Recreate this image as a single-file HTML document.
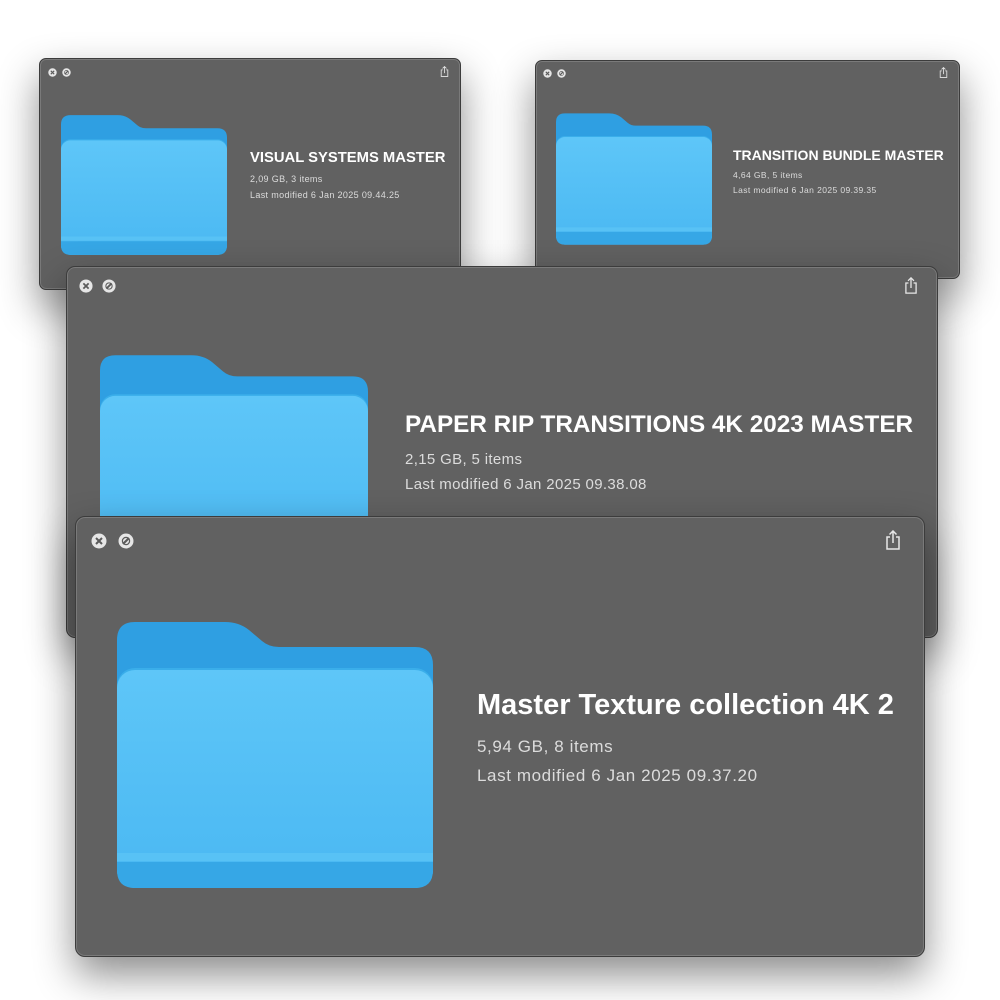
<!DOCTYPE html>
<html><head><meta charset="utf-8"><style>
body{margin:0;width:1000px;height:1000px;background:#fff;position:relative;overflow:hidden;font-family:"Liberation Sans",Arial,sans-serif}
.w{position:absolute;background:#616161;border:1px solid #3c3c3c;box-shadow:inset 0 0 0 1px #7a7a7a,0 18px 40px rgba(0,0,0,.45);box-sizing:border-box}
.f{position:absolute}
.t{position:absolute;color:#fff;font-weight:bold;white-space:nowrap}
.s{position:absolute;color:#dcdcdc;white-space:nowrap}
.ic{position:absolute}
</style></head><body>
<svg width="0" height="0" style="position:absolute">
<defs>
<linearGradient id="fg" x1="0" y1="0" x2="0" y2="1"><stop offset="0" stop-color="#5ec6f8"/><stop offset="1" stop-color="#4ab8f2"/></linearGradient>
<symbol id="folder" viewBox="0 0 316 266">
<path d="M0 18Q0 0 18 0H108Q122 0 132 8L145 19Q152 25 162 25H298Q316 25 316 43V240H0Z" fill="#2f9fe2"/>
<rect x="0" y="46" width="316" height="220" rx="18" fill="#3aaeea"/>
<rect x="0" y="48" width="316" height="218" rx="18" fill="url(#fg)"/>
<rect x="0" y="231" width="316" height="8" fill="#58c2f5"/>
<path d="M0 240H316V248Q316 266 298 266H18Q0 266 0 248Z" fill="#36a7e6"/>
</symbol>
<symbol id="x" viewBox="0 0 16 16"><circle cx="8" cy="8" r="7.5" fill="#e6e6e6"/><path d="M5 5L11 11M11 5L5 11" stroke="#5a5a5a" stroke-width="2"/></symbol>
<symbol id="n" viewBox="0 0 16 16"><circle cx="8" cy="8" r="7.5" fill="#e6e6e6"/><path d="M5 11L11 5" stroke="#5a5a5a" stroke-width="2.2"/><circle cx="8" cy="8" r="3.6" fill="none" stroke="#5a5a5a" stroke-width="1.2"/></symbol>
<symbol id="sh" viewBox="0 0 16 20"><path d="M5 7H2V19H14V7H11M8 13V1M4.5 4.5L8 1L11.5 4.5" fill="none" stroke="#e8e8e8" stroke-width="1.5"/></symbol>
</defs></svg>

<div class="w" style="left:39px;top:58px;width:422px;height:232px;border-radius:7px"></div>
<svg class="ic" style="left:48px;top:68px" width="9" height="9"><use href="#x"/></svg>
<svg class="ic" style="left:62px;top:68px" width="9" height="9"><use href="#n"/></svg>
<svg class="ic" style="left:440px;top:66px" width="9" height="11"><use href="#sh"/></svg>
<svg class="f" style="left:61px;top:115px" width="166" height="140"><use href="#folder"/></svg>
<div class="t" style="left:250px;top:150px;font-size:14.8px">VISUAL SYSTEMS MASTER</div>
<div class="s" style="left:250px;top:174px;font-size:9px;letter-spacing:.35px">2,09 GB, 3 items</div>
<div class="s" style="left:250px;top:190px;font-size:9px;letter-spacing:.35px">Last modified 6 Jan 2025 09.44.25</div>

<div class="w" style="left:535px;top:60px;width:425px;height:219px;border-radius:7px"></div>
<svg class="ic" style="left:543px;top:69px" width="9" height="9"><use href="#x"/></svg>
<svg class="ic" style="left:557px;top:69px" width="9" height="9"><use href="#n"/></svg>
<svg class="ic" style="left:939px;top:67px" width="9" height="11"><use href="#sh"/></svg>
<svg class="f" style="left:556px;top:113px" width="156" height="132"><use href="#folder"/></svg>
<div class="t" style="left:733px;top:147px;font-size:14px">TRANSITION BUNDLE MASTER</div>
<div class="s" style="left:733px;top:170px;font-size:8.5px;letter-spacing:.4px">4,64 GB, 5 items</div>
<div class="s" style="left:733px;top:185px;font-size:8.5px;letter-spacing:.4px">Last modified 6 Jan 2025 09.39.35</div>

<div class="w" style="left:66px;top:266px;width:872px;height:372px;border-radius:9px"></div>
<svg class="ic" style="left:79px;top:279px" width="14" height="14"><use href="#x"/></svg>
<svg class="ic" style="left:102px;top:279px" width="14" height="14"><use href="#n"/></svg>
<svg class="ic" style="left:904px;top:277px" width="14" height="17"><use href="#sh"/></svg>
<svg class="f" style="left:100px;top:355px" width="268" height="226"><use href="#folder"/></svg>
<div class="t" style="left:405px;top:411px;font-size:24.3px">PAPER RIP TRANSITIONS 4K 2023 MASTER</div>
<div class="s" style="left:405px;top:451px;font-size:15px;letter-spacing:.35px">2,15 GB, 5 items</div>
<div class="s" style="left:405px;top:476px;font-size:15px;letter-spacing:.35px">Last modified 6 Jan 2025 09.38.08</div>

<div class="w" style="left:75px;top:516px;width:850px;height:441px;border-radius:10px"></div>
<svg class="ic" style="left:91px;top:533px" width="16" height="16"><use href="#x"/></svg>
<svg class="ic" style="left:118px;top:533px" width="16" height="16"><use href="#n"/></svg>
<svg class="ic" style="left:885px;top:530px" width="16" height="20"><use href="#sh"/></svg>
<svg class="f" style="left:117px;top:622px" width="316" height="266"><use href="#folder"/></svg>
<div class="t" style="left:477px;top:689px;font-size:29px">Master Texture collection 4K 2</div>
<div class="s" style="left:477px;top:737px;font-size:17px;letter-spacing:.6px">5,94 GB, 8 items</div>
<div class="s" style="left:477px;top:766px;font-size:17px;letter-spacing:.6px">Last modified 6 Jan 2025 09.37.20</div>
</body></html>
